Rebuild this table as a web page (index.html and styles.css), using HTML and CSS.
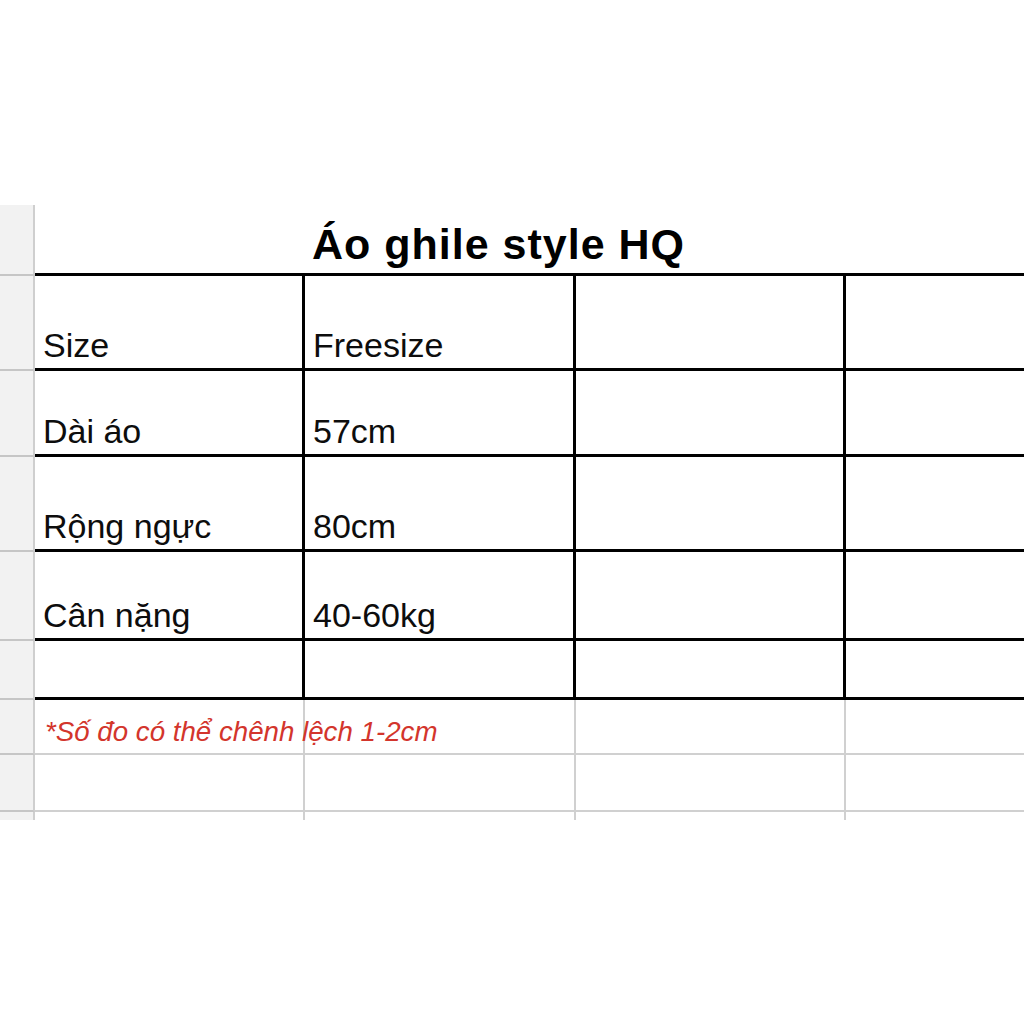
FILE: index.html
```html
<!DOCTYPE html>
<html lang="vi">
<head>
<meta charset="utf-8">
<title>Áo ghile style HQ</title>
<link rel="stylesheet" href="styles.css">
</head>
<body>
<div class="sheet">
  <div class="row r-title">
    <div class="hdr"></div>
    <div class="cell title-cell"><span class="title">Áo ghile style HQ</span></div>
  </div>
  <div class="row r1 black">
    <div class="hdr"></div>
    <div class="cell ca"><span class="txt">Size</span></div>
    <div class="cell cb"><span class="txt">Freesize</span></div>
    <div class="cell cc"></div>
    <div class="cell cd"></div>
  </div>
  <div class="row r2 black">
    <div class="hdr"></div>
    <div class="cell ca"><span class="txt">Dài áo</span></div>
    <div class="cell cb"><span class="txt">57cm</span></div>
    <div class="cell cc"></div>
    <div class="cell cd"></div>
  </div>
  <div class="row r3 black">
    <div class="hdr"></div>
    <div class="cell ca"><span class="txt">Rộng ngực</span></div>
    <div class="cell cb"><span class="txt">80cm</span></div>
    <div class="cell cc"></div>
    <div class="cell cd"></div>
  </div>
  <div class="row r4 black">
    <div class="hdr"></div>
    <div class="cell ca"><span class="txt">Cân nặng</span></div>
    <div class="cell cb"><span class="txt">40-60kg</span></div>
    <div class="cell cc"></div>
    <div class="cell cd"></div>
  </div>
  <div class="row r5 black">
    <div class="hdr"></div>
    <div class="cell ca"></div>
    <div class="cell cb"></div>
    <div class="cell cc"></div>
    <div class="cell cd"></div>
  </div>
  <div class="row r6 gray">
    <div class="hdr"></div>
    <div class="cell ca note-cell"><span class="note">*Số đo có thể chênh lệch 1-2cm</span></div>
    <div class="cell cb"></div>
    <div class="cell cc"></div>
    <div class="cell cd"></div>
  </div>
  <div class="row r7 gray">
    <div class="hdr"></div>
    <div class="cell ca"></div>
    <div class="cell cb"></div>
    <div class="cell cc"></div>
    <div class="cell cd"></div>
  </div>
  <div class="row r8 gray last">
    <div class="hdr"></div>
    <div class="cell ca"></div>
    <div class="cell cb"></div>
    <div class="cell cc"></div>
    <div class="cell cd"></div>
  </div>
</div>
</body>
</html>
```

FILE: styles.css
```css
html, body {
  margin: 0;
  padding: 0;
  background: #ffffff;
}
body {
  font-family: "Liberation Sans", Arial, sans-serif;
  color: #111111;
}
.sheet {
  padding-top: 205px;
  display: flex;
  flex-direction: column;
}
.row {
  display: flex;
  box-sizing: border-box;
}
.hdr {
  width: 35px;
  flex: none;
  box-sizing: border-box;
  background: #f2f2f2;
  border-right: 2px solid #cfcfcf;
  border-bottom: 2px solid #c6c6c6;
}
.cell {
  box-sizing: border-box;
  display: flex;
  align-items: flex-end;
}
.ca { width: 270px; flex: none; }
.cb { width: 271px; flex: none; }
.cc { width: 270px; flex: none; }
.cd { flex: 1; }

.black .cell { border-bottom: 3px solid #000; }
.black .ca, .black .cb, .black .cc { border-right: 3px solid #000; }
.gray .cell { border-bottom: 2px solid #d0d0d0; }
.gray .ca, .gray .cb, .gray .cc { border-right: 2px solid #d0d0d0; }
.r6 .ca { padding-right: 1px; }

.r-title { height: 71px; }
.title-cell {
  flex: 1;
  border-bottom: 3px solid #000;
  padding-left: 277px;
  padding-bottom: 7px;
}
.title {
  font-weight: bold;
  font-size: 43px;
  line-height: 43px;
  letter-spacing: 1px;
  color: #000;
}
.r1 { height: 95px; }
.r2 { height: 86px; }
.r3 { height: 95px; }
.r4 { height: 89px; }
.r5 { height: 59px; }
.r6 { height: 55px; }
.r7 { height: 57px; }
.r8 { height: 8px; }
.last .cell, .last .hdr { border-bottom: none; }

.cell .txt {
  font-size: 34px;
  line-height: 34px;
  padding-left: 8px;
  padding-bottom: 6px;
  color: #0d0d0d;
  white-space: nowrap;
}
.note-cell { overflow: visible; }
.note {
  font-style: italic;
  font-size: 27.7px;
  line-height: 28px;
  color: #d3352c;
  padding-left: 10px;
  padding-bottom: 7px;
  white-space: nowrap;
}
```
